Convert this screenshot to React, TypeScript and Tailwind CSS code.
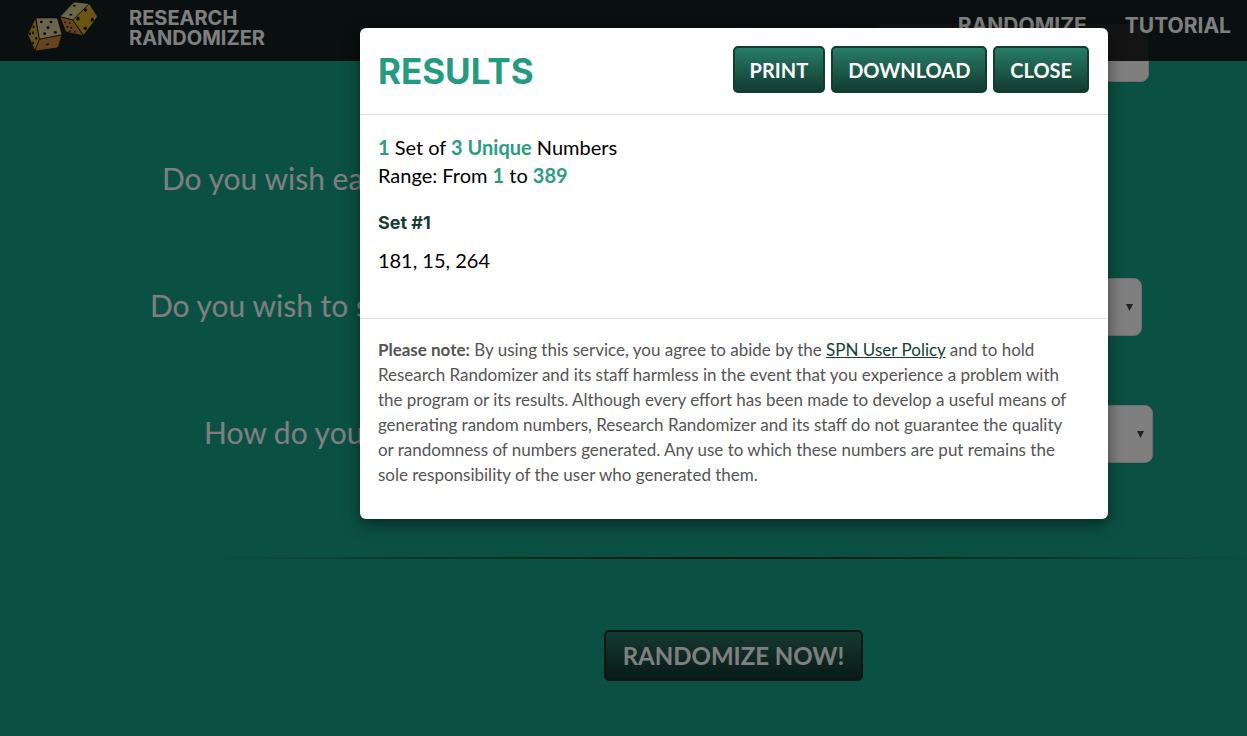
import type { ReactNode } from "react";

const DISPLAY = "font-['Inter','Liberation_Sans',sans-serif] font-bold uppercase";

function Pips({ points }: { points: [number, number, number, number][] }) {
  return (
    <g fill="#15130c">
      {points.map(([cx, cy, rx, ry], i) => (
        <ellipse key={i} cx={cx} cy={cy} rx={rx} ry={ry} />
      ))}
    </g>
  );
}

function DiceLogo() {
  return (
    <svg viewBox="75 0 225 180" className="h-15 w-[75px] shrink-0" aria-hidden="true">
      <g strokeLinejoin="round" stroke="#15130c" strokeWidth="2">
        <path d="M108 54 L168 54 Q173 54 174 60 L186 104 L118 118 Z" fill="#d8cb96" />
        <path d="M106 54 L118 118 L105 153 L84 106 Q84 102 86 98 Z" fill="#cfa924" />
        <path d="M118 118 L186 105 L175 140 Q174 143 170 144 L105 153 Z" fill="#c98a3a" />
        <path d="M180 50 L219 9 Q222 6 226 6 L268 11 L219 60 Z" fill="#d8cb96" />
        <path d="M268 11 L291 47 Q293 50 290 54 L251 106 L218 60 Z" fill="#d4ac1e" />
        <path d="M180 51 L218 60 L250 107 L202 97 Q198 96 196 92 Z" fill="#c98a3a" />
      </g>
      <Pips
        points={[
          [124, 66, 4.5, 3.5], [153, 66, 4.5, 3.5], [144, 83, 4.5, 4], [134, 101, 4.5, 4], [166, 97, 4.5, 4],
          [101, 80, 3, 4.5], [90, 101, 3, 4.5], [99, 98, 3, 4.5], [109, 115, 3, 4.5], [99, 129, 3, 4.5],
          [143, 133, 5, 2.5],
          [223, 17, 4.5, 2.5], [213, 44, 4.5, 2.5],
          [256, 30, 5, 5.5], [234, 56, 5, 5.5], [277, 59, 5, 5.5], [256, 85, 5, 5.5],
          [195, 67, 3, 2.5], [209, 69, 3, 2.5], [202, 80, 3, 2.5], [214, 83, 3, 2.5], [209, 94, 3, 2.5], [224, 95, 3, 2.5],
        ]}
      />
    </svg>
  );
}

function Question({
  id,
  label,
  options,
  className,
}: {
  id: string;
  label: string;
  options?: string[];
  className: string;
}) {
  return (
    <div className={`flex h-[58px] items-center justify-between ${className}`}>
      <label htmlFor={id} className="pb-1 text-3xl leading-10 whitespace-nowrap text-white">
        {label}
      </label>
      {options ? (
        <div className="relative shrink-0">
          <select
            id={id}
            className="h-[58px] w-[108px] appearance-none rounded-lg border border-[#dddddd] bg-white pr-8 pl-3 text-xl text-[#333333]"
          >
            {options.map((o) => (
              <option key={o}>{o}</option>
            ))}
          </select>
          <svg viewBox="0 0 7 7" className="pointer-events-none absolute top-[26px] right-[9px] size-[7px]" aria-hidden="true">
            <path d="M0 0 H7 L3.5 7 Z" fill="#444444" />
          </svg>
        </div>
      ) : (
        <input
          id={id}
          type="text"
          className="h-[58px] w-[275px] rounded-lg border border-[#dddddd] bg-white px-3 text-xl text-[#333333]"
        />
      )}
    </div>
  );
}

function DialogButton({ children }: { children: ReactNode }) {
  return (
    <button
      type="button"
      className="h-[47px] rounded-[5px] border-2 border-[#133c31] bg-linear-to-b from-[#277d66] to-[#113c31] px-[15px] text-xl leading-6 font-bold text-white uppercase"
    >
      {children}
    </button>
  );
}

function Accent({ children }: { children: ReactNode }) {
  return <strong className="font-bold text-[#2a9d80]">{children}</strong>;
}

export default function App() {
  return (
    <div className="relative min-h-screen overflow-hidden bg-[#16a286] font-['Lato','Liberation_Sans',sans-serif]">
      <header className="absolute inset-x-0 top-0 z-10 flex h-[61px] justify-between bg-[#141314]/91 pr-4 pl-[25px] text-white">
        <a href="#home" className="flex gap-[29px]">
          <DiceLogo />
          <span className={`pt-2 text-xl leading-5 ${DISPLAY}`}>
            Research
            <br />
            Randomizer
          </span>
        </a>
        <nav className={`flex gap-[38px] pt-3 text-[21px] leading-7 ${DISPLAY}`}>
          <a href="#randomize">Randomize</a>
          <a href="#tutorial">Tutorial</a>
        </nav>
      </header>

      <main>
        <form>
          <div className="flex flex-col gap-[69px] pt-6">
            <Question id="range" label="Number range" className="mr-[98px] ml-[400px]" />
            <Question
              id="unique"
              label="Do you wish each number in a set to remain unique?"
              options={["Yes", "No"]}
              className="mr-[150px] ml-[162px]"
            />
            <Question
              id="sort"
              label="Do you wish to sort the numbers that are generated?"
              options={["No", "Yes"]}
              className="mr-[105px] ml-[150px]"
            />
            <Question
              id="view"
              label="How do you wish to view your random numbers?"
              options={["Off"]}
              className="mr-[94px] ml-[204px]"
            />
          </div>
          <hr className="mt-[94px] -mr-5 ml-[200px] h-0.5 border-0 bg-linear-to-r from-transparent via-[#1c2c10] to-transparent" />
          <div className="mt-[71px] flex justify-center pl-[220px]">
            <button
              type="submit"
              className="h-[51px] rounded-[5px] border-2 border-[#0c2f28] bg-linear-to-b from-[#2b7562] to-[#103530] px-[17px] text-2xl leading-7 font-bold text-white uppercase"
            >
              Randomize Now!
            </button>
          </div>
        </form>
      </main>

      <div className="absolute inset-0 z-20 flex items-start justify-center bg-black/50 pt-7 pl-[221px]">
        <section
          role="dialog"
          aria-labelledby="results-title"
          className="w-[60vw] rounded-md bg-white text-black shadow-[0_5px_15px_rgba(0,0,0,0.5)]"
        >
          <div className="flex items-start justify-between border-b border-[#e0e0e0] pt-[18px] pr-[19px] pb-[21px] pl-[18px]">
            <h2 id="results-title" className={`pt-[5px] text-[35px] leading-10 text-[#239b81] ${DISPLAY}`}>
              Results
            </h2>
            <div className="flex gap-1.5">
              <DialogButton>Print</DialogButton>
              <DialogButton>Download</DialogButton>
              <DialogButton>Close</DialogButton>
            </div>
          </div>

          <div className="px-[18px] pt-[18px] pb-[44px] text-xl leading-7">
            <p>
              <Accent>1</Accent> Set of <Accent>3 Unique</Accent> Numbers
              <br />
              Range: From <Accent>1</Accent> to <Accent>389</Accent>
            </p>
            <h3 className="mt-5 font-['Inter','Liberation_Sans',sans-serif] text-lg leading-7 font-bold text-[#153f34]">
              Set #1
            </h3>
            <p className="mt-[9px]">181, 15, 264</p>
          </div>

          <p className="border-t border-[#e0e0e0] pt-[18px] pr-8 pb-8 pl-[18px] text-[17px] leading-[25px] text-[#555555]">
            <strong className="font-bold">Please note:</strong> By using this service, you agree to abide by the{" "}
            <a href="#policy" className="text-[#153f34] underline">
              SPN User Policy
            </a>{" "}
            and to hold Research Randomizer and its staff harmless in the event that you experience a problem with the
            program or its results. Although every effort has been made to develop a useful means of generating random
            numbers, Research Randomizer and its staff do not guarantee the quality or randomness of numbers generated.
            Any use to which these numbers are put remains the sole responsibility of the user who generated them.
          </p>
        </section>
      </div>
    </div>
  );
}
